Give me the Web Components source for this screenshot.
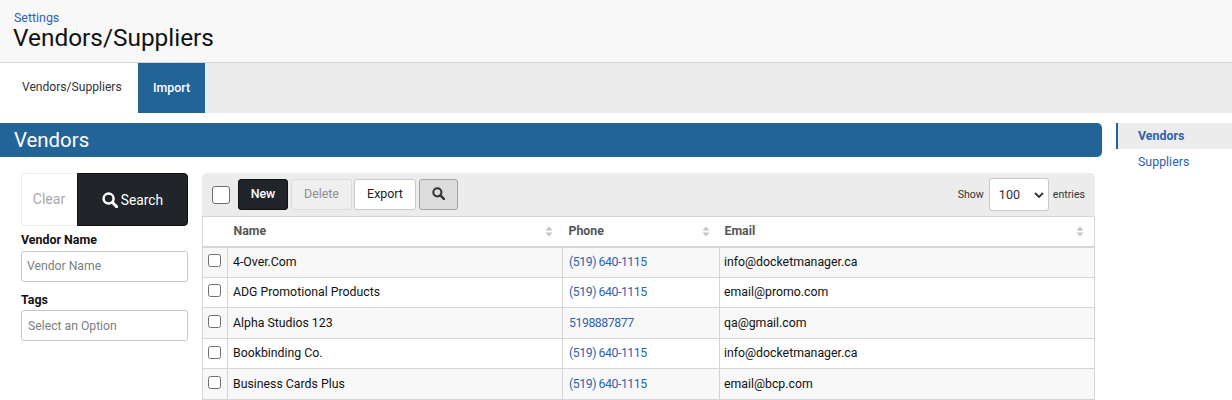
<!DOCTYPE html>
<html><head><meta charset="utf-8">
<style>
html,body{margin:0;padding:0;background:#fff;overflow:hidden;height:400px}
body{font-family:Roboto,"Noto Sans",sans-serif;color:#212529}
</style></head><body>
<app-page></app-page>
<script>
const searchIcon=(s,c)=>`<svg width="${s}" height="${s}" viewBox="0 0 16 16" style="display:block"><circle cx="6.6" cy="6.6" r="5" fill="none" stroke="${c}" stroke-width="2.5"/><path d="M10.4 10.4 L14.6 14.6" stroke="${c}" stroke-width="2.9" stroke-linecap="round"/></svg>`;
function def(name,css,html){
  customElements.define(name,class extends HTMLElement{
    constructor(){super();const r=this.attachShadow({mode:'open'});
      r.innerHTML=`<style>${css}</style>`+(typeof html==='function'?html(this):html);}
  });
}
def('page-header',`
:host{display:flex;flex-direction:column;height:62px;background:#f8f8f8;border-bottom:1px solid #d6d6d6;padding-left:13px;box-sizing:content-box}
a{color:#2f62ad;font-size:12.4px;line-height:14px;margin:11px 0 0 1px;display:block}
h1{margin:-1px 0 0;font-weight:400;font-size:24.4px;line-height:28px;color:#111}
`,`<a>Settings</a><h1>Vendors/Suppliers</h1>`);
def('tab-bar',`
:host{display:flex;height:50px;background:#ececec;font-size:12.1px}
div{display:flex;align-items:center;padding-bottom:2px;box-sizing:border-box}
.a{width:138px;background:#fff;color:#333;padding-left:22px}
.b{width:67px;background:#236498;color:#fff;font-weight:500;justify-content:center;font-size:12.4px}
`,`<div class="a">Vendors/Suppliers</div><div class="b">Import</div>`);
def('section-banner',`
:host{display:flex;align-items:center;height:34px;background:#236498;border-radius:0 5px 5px 0;color:#fff;font-size:20.4px;padding-left:14px;box-sizing:border-box}
`,`<span>Vendors</span>`);
def('side-nav',`
:host{display:block;width:116px;font-size:12.4px}
div{height:26px;display:flex;align-items:center;padding:0 0 2px 22px;color:#2f62ad;box-sizing:border-box}
.on{background:#ececec;border-left:2px solid #236498;padding-left:20px;font-weight:700}
`,`<div class="on">Vendors</div><div>Suppliers</div>`);
def('filter-panel',`
:host{display:block;width:167px;font-size:12.4px}
.btns{display:flex;height:53px}
.clear{width:56px;box-sizing:border-box;border:1px solid #ececec;border-right:0;border-radius:4px 0 0 4px;display:flex;align-items:center;justify-content:center;color:#a8a8a8;font-size:14px;padding:0 1px 1px 0}
.search{flex:1;background:#212529;border:1px solid #111;border-radius:0 4px 4px 0;color:#fff;display:flex;align-items:center;justify-content:center;gap:3px;font-size:13.8px;box-sizing:border-box}
label{display:block;font-weight:700;color:#111;line-height:16px;font-size:12.4px}
.l1{margin-top:6px}.l2{margin-top:10px}
.in{box-sizing:border-box;height:31px;border:1px solid #c9c9c9;border-radius:3px;display:flex;align-items:center;padding:0 0 2px 5px;color:#7e7e7e;font-size:12.2px;background:#fff;margin-top:3px}
.l2+.in{padding:0 0 0 6px;margin-top:2px}
`,`<div class="btns"><div class="clear">Clear</div><div class="search">${searchIcon(16,'#fff')}<span>Search</span></div></div>
<label class="l1">Vendor Name</label><div class="in">Vendor Name</div>
<label class="l2">Tags</label><div class="in">Select an Option</div>`);
def('table-toolbar',`
:host{display:flex;align-items:center;height:43px;background:#ececec;border-radius:5px 5px 0 0;padding:0 10px;box-sizing:border-box;font-size:12.4px}
.cb{width:18px;height:18px;border:1px solid #707070;border-radius:3px;background:#fff;box-sizing:border-box;margin-right:8px}
.b{height:31px;box-sizing:border-box;border-radius:3px;display:flex;align-items:center;justify-content:center;margin-right:3px;padding-bottom:3px}
.new{width:50px;background:#212529;border:1px solid #111;color:#fff;font-weight:500}
.del{width:61px;background:#efefef;border:1px solid #dcdcdc;color:#8e8e8e;margin-right:2px}
.exp{width:62px;background:#fff;border:1px solid #c9c9c9;color:#222;margin-right:3px}
.sr{width:39px;background:#dcdcdc;border:1px solid #a5a5a5}
.sp{flex:1}
.sm{font-size:10.6px;color:#333}
.sel{width:60px;height:33px;box-sizing:border-box;margin:0 4px 0 5px;border:1px solid #c9c9c9;border-radius:3px;background:#fff;display:flex;align-items:center;justify-content:space-between;padding:0 3px 0 9px;font-size:12.6px;color:#333}
`,`<div class="cb"></div><div class="b new">New</div><div class="b del">Delete</div><div class="b exp">Export</div><div class="b sr">${searchIcon(13,'#333')}</div><div class="sp"></div>
<span class="sm">Show</span><div class="sel"><span>100</span><svg width="12" height="12" viewBox="0 0 12 12"><path d="M2 4l4 4 4-4" fill="none" stroke="#333" stroke-width="1.8"/></svg></div><span class="sm">entries</span>`);
def('vendor-table',`
:host{display:block;font-size:12.3px;color:#111}
table{border-collapse:collapse;table-layout:fixed;width:893px;border:1px solid #d6d6d6}
col.c0{width:25px}col.c1{width:335px}col.c2{width:157px}
th,td{border:1px solid #d6d6d6;padding:0 5px .4px;text-align:left;box-sizing:border-box;height:30.6px}
th{height:30px;border-left:0;border-right:0;border-bottom:2px solid #d6d6d6;color:#555;font-weight:700;background:#fff;position:relative;padding-bottom:0}
th:nth-child(2){padding-left:6px}
tr:nth-child(odd) td{background:#f8f8f8}
tr:nth-child(even) td{background:#fff}
td:first-child{padding:0 0 3px 5px}
.chk{display:block;width:13px;height:13px;border:1px solid #707070;border-radius:2.5px;background:#fff;box-sizing:border-box}
td a{color:#2f62ad;margin-left:1px;letter-spacing:-.45px}
td:last-child{padding-left:4px}
.s{position:absolute;right:10px;top:9px;display:block}
`,()=>{
  const rows=[['4-Over.Com','(519) 640-1115','info@docketmanager.ca'],['ADG Promotional Products','(519) 640-1115','email@promo.com'],['Alpha Studios 123','5198887877','qa@gmail.com'],['Bookbinding Co.','(519) 640-1115','info@docketmanager.ca'],['Business Cards Plus','(519) 640-1115','email@bcp.com']];
  const sort=`<svg class="s" width="8" height="11" viewBox="0 0 8 11"><path d="M4 0.5L7.5 4.5H0.5Z M4 10.5L0.5 6.5H7.5Z" fill="#c4c4c4"/></svg>`;
  return `<table><colgroup><col class="c0"><col class="c1"><col class="c2"><col></colgroup>
  <thead><tr><th></th><th>Name${sort}</th><th style="padding-left:6px">Phone${sort}</th><th>Email${sort}</th></tr></thead>
  <tbody>${rows.map(r=>`<tr><td><span class="chk"></span></td><td>${r[0]}</td><td><a>${r[1]}</a></td><td>${r[2]}</td></tr>`).join('')}</tbody></table>`;
});
def('app-page',`
:host{display:block;height:400px;overflow:hidden}
.wrap{display:flex;margin-top:10px}
.left{width:1102px;flex:none}
.nav{margin-left:14px}
.body{display:flex;gap:14px;padding:16px 0 0 21px}
.main{width:893px}
`,`<page-header></page-header><tab-bar></tab-bar>
<div class="wrap"><div class="left"><section-banner></section-banner>
<div class="body"><filter-panel></filter-panel><div class="main"><table-toolbar></table-toolbar><vendor-table></vendor-table></div></div></div>
<div class="nav"><side-nav></side-nav></div></div>`);
</script></body></html>
